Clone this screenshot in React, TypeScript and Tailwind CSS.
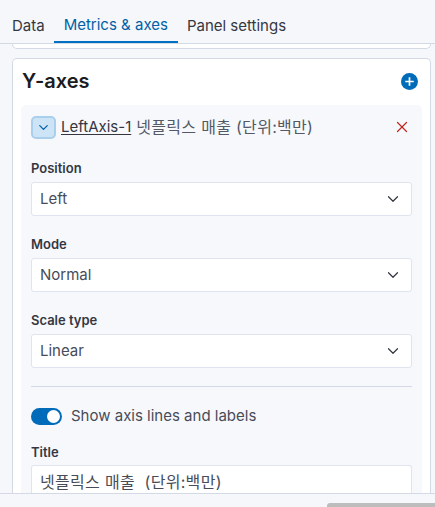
import { ChevronDown, X } from "lucide-react";

const font = { fontFamily: "Inter, 'Noto Sans CJK KR', sans-serif" };

function SelectBox({ value }: { value: string }) {
  return (
    <div className="flex h-[34px] items-center justify-between rounded-[3px] border border-[#dfe4ee] bg-white pl-2 pr-[9px]">
      <span className="text-[15px] text-[#474c58]">{value}</span>
      <ChevronDown size={18} strokeWidth={1.6} className="text-[#343741]" />
    </div>
  );
}

function Field({ label, value }: { label: string; value: string }) {
  return (
    <div className="flex flex-col">
      <div className="mb-[5px] text-[13px] font-semibold leading-[18px] text-[#343741]">{label}</div>
      <SelectBox value={value} />
    </div>
  );
}

export default function App() {
  return (
    <div className="flex h-[507px] w-[435px] flex-col overflow-hidden bg-[#f5f7fa]" style={font}>
      {/* Tabs */}
      <div className="flex h-[44px] shrink-0 items-end border-b border-[#d3dae6] pl-[12px]">
        <div className="flex h-full">
          <div className="flex items-center pt-[9px] pr-[9px] text-[15px] text-[#343741]">Data</div>
          <div className="flex items-center border-b-2 border-[#0071c2] px-[10px] pt-[9px] text-[15px] text-[#0061a6]">
            Metrics &amp; axes
          </div>
          <div className="flex items-center px-[9px] pt-[9px] text-[15px] text-[#343741]">Panel settings</div>
        </div>
      </div>

      {/* Scroll area */}
      <div className="flex min-h-0 flex-1 flex-col overflow-hidden pl-[12px] pr-[4px]">
        {/* bottom of previous card */}
        <div className="h-[5px] shrink-0 rounded-b-[5px] border border-t-0 border-[#d3dae6] bg-white" />

        {/* Y-axes card */}
        <div className="mt-[9px] flex flex-col rounded-t-[5px] border border-b-0 border-[#d3dae6] bg-white px-[8px] pt-[10px]">
          <div className="flex items-center justify-between pl-[1px] pr-[4px]">
            <h2 className="text-[20px] font-semibold leading-[24px] text-[#1a1c21]">Y-axes</h2>
            <svg width="17" height="17" viewBox="0 0 16 16">
              <circle cx="8" cy="8" r="8" fill="#006bb8" />
              <path d="M8 4v8M4 8h8" stroke="white" strokeWidth="1.6" />
            </svg>
          </div>

          {/* Axis panel */}
          <div className="mt-[12px] flex flex-col rounded-t-[5px] bg-[#f7f8fc] px-[10px] pt-[10px]">
            <div className="flex items-center justify-between">
              <div className="flex items-center">
                <div className="flex h-[23px] w-[25px] items-center justify-center rounded-[5px] border-2 border-[#a9cfec] bg-[#cce4f5]">
                  <ChevronDown size={15} strokeWidth={2} className="text-[#0061a6]" />
                </div>
                <span className="ml-[5px] text-[15px] text-[#343741] underline underline-offset-2">LeftAxis-1 </span>
                <span className="ml-[5px] text-[16px] tracking-[0.3px] text-[#535966]">넷플릭스 매출 (단위:백만)</span>
              </div>
              <X size={18} strokeWidth={1.6} className="mr-[1px] text-[#bd271e]" />
            </div>

            <div className="mt-[20px] flex flex-col gap-[19px]">
              <Field label="Position" value="Left" />
              <Field label="Mode" value="Normal" />
              <Field label="Scale type" value="Linear" />
            </div>

            <div className="mt-[18px] h-px bg-[#d3dae6]" />

            <div className="mt-[18px] flex items-center">
              <div className="flex h-[17px] w-[31px] items-center justify-end rounded-full bg-[#006bb8] pr-[2px]">
                <div className="h-[13px] w-[13px] rounded-full bg-white" />
              </div>
              <span className="ml-[9px] text-[15px] text-[#474c58]">Show axis lines and labels</span>
            </div>

            <div className="mt-[15px] mb-[4px] text-[13px] font-semibold leading-[18px] text-[#343741]">Title</div>
            <div className="flex h-[34px] items-center rounded-t-[3px] border border-b-0 border-[#dfe4ee] bg-white pl-2">
              <span className="text-[16px] tracking-[0.3px] text-[#474c58]">넷플릭스 매출&nbsp; (단위:백만)</span>
            </div>
          </div>
        </div>
      </div>

      {/* Footer */}
      <div className="relative h-[14px] shrink-0 border-t border-[#d3dae6] bg-[#f5f7fa]">
        <div className="absolute bottom-0 left-[327px] right-0 h-[4px] rounded-tl-[3px] bg-[#bdbdbd]" />
      </div>
    </div>
  );
}
